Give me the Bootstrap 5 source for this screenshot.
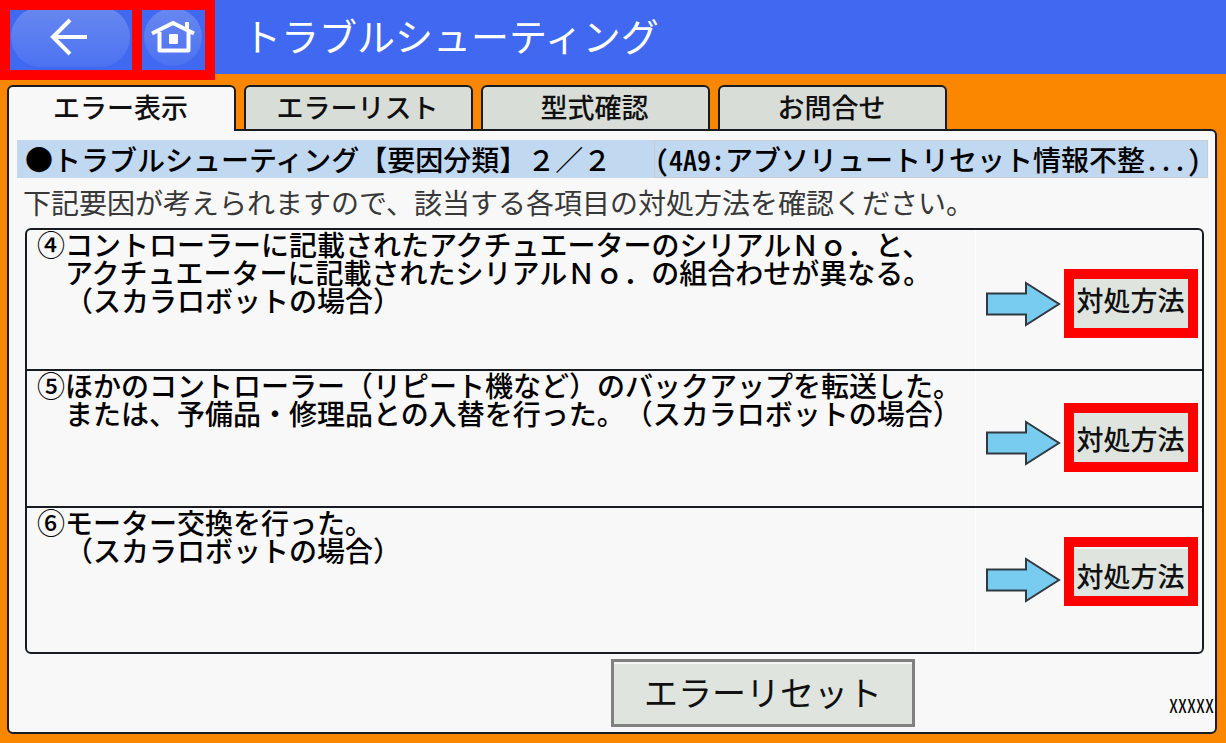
<!DOCTYPE html>
<html lang="ja">
<head>
<meta charset="utf-8">
<meta name="viewport" content="width=device-width, initial-scale=1">
<title>トラブルシューティング</title>
<link href="https://cdn.jsdelivr.net/npm/bootstrap@5.3.0/dist/css/bootstrap.min.css" rel="stylesheet">
<style>
  :root { --ink: #181c20; --paper: #f8f8f8; --key: #dfe4df; --frame: #ff0000; }
  body { background: #fb8700; color: #000; font-family: "Noto Sans CJK JP", sans-serif; font-size: 28px; line-height: 28px; text-spacing-trim: space-all; }
  .topbar { height: 74px; background: #4068f0; }
  .topbar h1 { font-size: 38px; line-height: 70px; font-weight: 400; padding-left: 28px; }
  .topkey, .topkey:hover, .topkey:active { height: 80px; border: 10px solid var(--frame); border-radius: 0; background: #4068f0; position: relative; z-index: 2; }
  .topkey-back { width: 142px; }
  .topkey-home { width: 83px; margin-left: -10px; }
  .tabs { padding: 11px 7px 0; gap: 8px; }
  .tabs .nav-link { flex: 0 1 229px; height: 44px; padding: 0 2px 0 0; border: 2px solid var(--ink); border-bottom: 0; border-radius: 6px 6px 0 0; background: #d8ddd8; color: #101010; font-size: 27px; font-weight: 500; line-height: 40px; text-align: center; }
  .tabs .nav-link.active { height: 46px; margin-bottom: -2px; background: var(--paper); position: relative; z-index: 1; }
  .panel { margin: 0 9px 9px 7px; background: var(--paper); border: 2px solid var(--ink); border-radius: 0 6px 6px 6px; }
  .headline { margin: 9px 7px 0 8px; height: 38px; line-height: 38px; font-size: 28px; font-weight: 500; background: #c0d8f0; white-space: nowrap; }
  .headline-code { border: 1px solid #c8ccd4; padding: 0 6px 0 0; line-height: 36px; }
  .half { font-feature-settings: "hwid"; }
  .note { padding: 0 14px; margin-top: 10px; color: #383838; }
  .causes { margin: 12px 11px 0 16px; border: 2px solid var(--ink); border-radius: 6px; }
  .cause { min-height: 137px; font-weight: 500; }
  .cause:first-child { min-height: 139px; }
  .cause + .cause { border-top: 2px solid var(--ink); }
  .cause-text { padding: 0 0 0 10px; }
  .cause-side { width: 227px; padding: 38px 11px 0 10px; border-left: 1px solid #fff; }
  .cause:first-child .cause-side { padding-top: 40px; }
  .arrow { margin-top: 11px; }
  .key { background: var(--key); border: 1px solid #808080; border-radius: 0; color: #101010; padding: 0; box-shadow: inset 0 2px #f4f6f4; font-weight: 500; }
  .key-action { width: 121px; height: 60px; font-size: 27px; }
  .key-reset { width: 304px; height: 68px; border-width: 3px; font-size: 34px; font-weight: 400; padding-bottom: 4px; }
  .marks { top: 39px; right: 4px; gap: 65px; pointer-events: none; }
  .marks span { width: 134px; height: 69px; border: 10px solid var(--frame); }
  .foot { padding: 5px 0 5px 4px; }
  .foot-left { flex: 2 1 0; }
  .foot-right { flex: 1 1 0; font-size: 18px; padding: 0 1px 8px 0; line-height: 28px; }
</style>
</head>
<body class="min-vh-100 d-flex flex-column">
<header class="topbar d-flex align-items-start text-white">
  <button type="button" class="btn topkey topkey-back p-0 d-flex overflow-hidden" aria-label="戻る">
    <svg width="122" height="60" viewBox="0 0 122 60">
      <defs><linearGradient id="glow" x1="0" y1="0" x2="0" y2="1"><stop offset="0" stop-color="#6888f0"/><stop offset="1" stop-color="#4c72f1"/></linearGradient></defs>
      <rect x="1" y="-3" width="119" height="60" rx="30" fill="url(#glow)"/>
      <path d="M60 10 43 27 60 44M43 27H77" fill="none" stroke="#fff" stroke-width="4"/>
    </svg>
  </button>
  <button type="button" class="btn topkey topkey-home p-0 d-flex overflow-hidden" aria-label="ホーム">
    <svg width="63" height="60" viewBox="0 0 63 60">
      <circle cx="31" cy="27" r="29" fill="url(#glow)"/>
      <path d="M17.500 22V40.500H46.500V22" fill="none" stroke="#fff" stroke-width="4" stroke-linejoin="round"/>
      <path d="M10 23.500 31 13 52 23.500M45 19V12" fill="none" stroke="#fff" stroke-width="4"/>
      <rect x="27" y="24" width="9" height="10" rx="1" fill="#fff"/>
    </svg>
  </button>
  <h1 class="m-0 text-nowrap">トラブルシューティング</h1>
</header>

<nav class="tabs nav flex-nowrap align-items-start">
  <a class="nav-link active" aria-current="page" href="#">エラー表示</a>
  <a class="nav-link" href="#">エラーリスト</a>
  <a class="nav-link" href="#">型式確認</a>
  <a class="nav-link" href="#">お問合せ</a>
</nav>

<main class="panel flex-grow-1 d-flex flex-column">
  <h2 class="headline mb-0 d-flex justify-content-between">
    <span class="ps-2">●トラブルシューティング【要因分類】２／２</span>
    <span class="headline-code half">(4A9:アブソリュートリセット情報不整...)</span>
  </h2>
  <p class="note mb-0">下記要因が考えられますので、該当する各項目の対処方法を確認ください。</p>

  <section class="causes position-relative flex-grow-1 d-flex flex-column">
    <div class="cause d-flex">
      <div class="cause-text flex-grow-1">④コントローラーに記載されたアクチュエーターのシリアルＮｏ．と、<br>　アクチュエーターに記載されたシリアルＮｏ．の組合わせが異なる。<br>　（スカラロボットの場合）</div>
      <div class="cause-side d-flex flex-shrink-0 justify-content-between align-items-start">
        <svg class="arrow" width="75" height="46" viewBox="0 0 75 46"><path d="M1 12.500H40V2L73 23 40 44V33.500H1Z" fill="#78ccf0" stroke="#303840" stroke-width="2"/></svg>
        <button type="button" class="btn key key-action">対処方法</button>
      </div>
    </div>
    <div class="cause d-flex">
      <div class="cause-text flex-grow-1">⑤ほかのコントローラー（リピート機など）のバックアップを転送した。<br>　または、予備品・修理品との入替を行った。（スカラロボットの場合）</div>
      <div class="cause-side d-flex flex-shrink-0 justify-content-between align-items-start">
        <svg class="arrow" width="75" height="46" viewBox="0 0 75 46"><path d="M1 12.500H40V2L73 23 40 44V33.500H1Z" fill="#78ccf0" stroke="#303840" stroke-width="2"/></svg>
        <button type="button" class="btn key key-action">対処方法</button>
      </div>
    </div>
    <div class="cause d-flex flex-grow-1">
      <div class="cause-text flex-grow-1">⑥モーター交換を行った。<br>　（スカラロボットの場合）</div>
      <div class="cause-side d-flex flex-shrink-0 justify-content-between align-items-start">
        <svg class="arrow" width="75" height="46" viewBox="0 0 75 46"><path d="M1 12.500H40V2L73 23 40 44V33.500H1Z" fill="#78ccf0" stroke="#303840" stroke-width="2"/></svg>
        <button type="button" class="btn key key-action">対処方法</button>
      </div>
    </div>
    <div class="marks position-absolute d-flex flex-column" aria-hidden="true"><span></span><span></span><span></span></div>
  </section>

  <footer class="foot d-flex align-items-end">
    <div class="foot-left"></div>
    <button type="button" class="btn key key-reset">エラーリセット</button>
    <div class="foot-right half text-end">XXXXX</div>
  </footer>
</main>
<script src="https://cdn.jsdelivr.net/npm/bootstrap@5.3.0/dist/js/bootstrap.bundle.min.js"></script>
</body>
</html>
